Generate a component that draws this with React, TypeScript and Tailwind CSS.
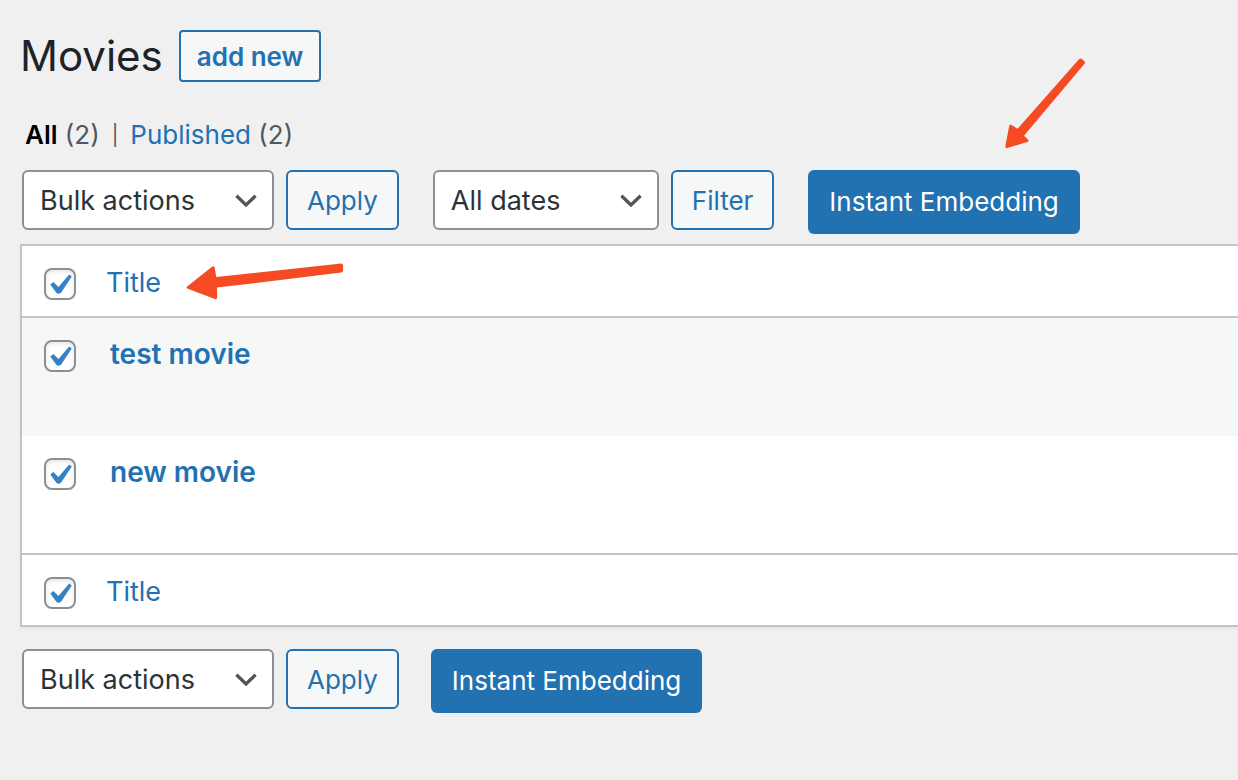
import React from "react";

const outlineButton =
  "h-15 shrink-0 rounded-md border-2 border-[#2271b1] bg-[#f6f7f7] px-[19px] text-[26px] text-[#2271b1]";

function SelectBox({ label, widthClass }: { label: string; widthClass: string }) {
  return (
    <div className={`relative shrink-0 ${widthClass}`}>
      <select
        aria-label={label}
        className="h-15 w-full appearance-none rounded-md border-2 border-[#8c8f94] bg-white pt-0.5 pr-12 pl-4 text-[27px] leading-10 text-[#2c3338]"
      >
        <option>{label}</option>
      </select>
      <svg
        className="pointer-events-none absolute top-6 right-4 h-4 w-6"
        viewBox="0 0 24 16"
        fill="none"
        stroke="#555"
        strokeWidth="3.3"
        aria-hidden="true"
      >
        <path d="M2.4 1.8 12 11 21.6 1.8" />
      </svg>
    </div>
  );
}

function CheckBox({ label }: { label: string }) {
  return (
    <span className="relative block size-8">
      <input
        type="checkbox"
        defaultChecked
        aria-label={label}
        className="peer block size-8 appearance-none rounded-lg border-2 border-[#8c8f94] bg-white shadow-[inset_0_2px_4px_rgba(0,0,0,0.1)]"
      />
      <svg
        className="pointer-events-none absolute inset-0 hidden size-8 peer-checked:block"
        viewBox="0 0 32 32"
        fill="#3582c4"
        aria-hidden="true"
      >
        <path d="M25.2 6.6 27.8 8.6 17.2 24.6Q16.4 25.7 14.8 25.8 13.3 26 12.3 24.7L6.3 16.4 9.4 14 14.4 18.9Z" />
      </svg>
    </span>
  );
}

function EmbedButton() {
  return (
    <button
      type="button"
      className="h-16 rounded-md bg-[#2271b1] px-[21px] pb-0.5 text-[26px] whitespace-nowrap text-white"
    >
      Instant Embedding
    </button>
  );
}

function BulkActions() {
  return (
    <div className="flex gap-3">
      <SelectBox label="Bulk actions" widthClass="w-[252px]" />
      <button type="button" className={outlineButton}>
        Apply
      </button>
    </div>
  );
}

function TitleRow({ edge, children }: { edge: string; children?: React.ReactNode }) {
  return (
    <tr className="bg-white">
      <th className={`h-[72px] w-[84px] pt-[22px] pl-[22px] align-top ${edge}`}>
        <CheckBox label="Select all" />
      </th>
      <th scope="col" className={`pt-[19px] text-left align-top text-[27px] leading-9 font-normal ${edge}`}>
        <span className="relative inline-block">
          <a href="#title" className="text-[#2271b1]">
            Title
          </a>
          {children}
        </span>
      </th>
    </tr>
  );
}

const movies = [
  { title: "test movie", row: "h-[118px] bg-[#f6f7f7]" },
  { title: "new movie", row: "h-[117px] bg-white" },
];

export default function App() {
  return (
    <main className="min-h-screen overflow-x-hidden bg-[#f0f0f1] pt-[30px] pb-16 pl-5 font-['Inter',sans-serif]">
      <header className="flex items-center gap-4">
        <h1 className="text-[42px] leading-[52px] text-[#1d2327]">Movies</h1>
        <a
          href="#new"
          className="flex h-[52px] items-center rounded border-2 border-[#2271b1] bg-[#f6f7f7] px-4 text-[26px] font-semibold text-[#2271b1]"
        >
          add new
        </a>
      </header>

      <nav aria-label="Filter by status" className="mt-9 flex items-center pl-[5px] text-[26px] leading-[34px] text-[#50575e]">
        <a href="#all">
          <strong className="font-semibold text-black">All</strong> (2)
        </a>
        <span className="mx-3 text-[20px]">|</span>
        <a href="#published">
          <span className="text-[#2271b1]">Published</span> (2)
        </a>
      </nav>

      <div className="mt-[18px] flex h-[74px] items-start pl-0.5">
        <BulkActions />
        <div className="ml-[34px] flex gap-3">
          <SelectBox label="All dates" widthClass="w-[226px]" />
          <button type="button" className={outlineButton}>
            Filter
          </button>
        </div>
        <div className="relative ml-[34px]">
          <EmbedButton />
          <svg
            className="pointer-events-none absolute -top-28 left-[196px] h-[92px] w-[82px]"
            viewBox="0 0 82 92"
            fill="#f64a24"
            aria-hidden="true"
          >
            <path d="M75.2 1.1Q76.5-.2 77.9 1L80.4 3.3Q81.6 4.6 80.5 5.8L20 77.7 24.4 82Q25.2 83.1 23.8 83.8L3.2 90.1Q1.2 90.5 1.3 88.5L5.3 67.6Q6 65.7 7.5 67L13.6 70.8Z" />
          </svg>
        </div>
      </div>

      <div className="border-2 border-r-0 border-[#c3c4c7] shadow-[0_2px_2px_rgba(0,0,0,0.04)]">
        <table className="w-full border-separate border-spacing-0">
          <thead>
            <TitleRow edge="border-b-2 border-[#c3c4c7]">
              <svg
                className="pointer-events-none absolute -top-[3px] left-20 h-10 w-40"
                viewBox="0 -3 160 40"
                fill="#f64a24"
                aria-hidden="true"
              >
                <path d="M1.2 21.5 26 1.8Q27.8.4 28.7 2.4L30.3 12 155.2-1.6Q156.7-1.7 157 0L157.2 5Q157.2 7.2 155.2 7.6L31 22.6 31.2 32.5Q30.8 34.6 28.8 34L1.2 23.4Q-.2 22.5 1.2 21.5Z" />
              </svg>
            </TitleRow>
          </thead>
          <tbody>
            {movies.map(({ title, row }) => (
              <tr key={title} className={row}>
                <td className="pt-[22px] pl-[22px] align-top">
                  <CheckBox label={`Select ${title}`} />
                </td>
                <td className="pt-[18px] pl-1 align-top text-[28px] leading-9 font-semibold">
                  <a href="#edit" className="text-[#2271b1]">
                    {title}
                  </a>
                </td>
              </tr>
            ))}
          </tbody>
          <tfoot>
            <TitleRow edge="border-t-2 border-[#c3c4c7]" />
          </tfoot>
        </table>
      </div>

      <div className="mt-[22px] flex items-start gap-8 pl-0.5">
        <BulkActions />
        <EmbedButton />
      </div>
    </main>
  );
}
